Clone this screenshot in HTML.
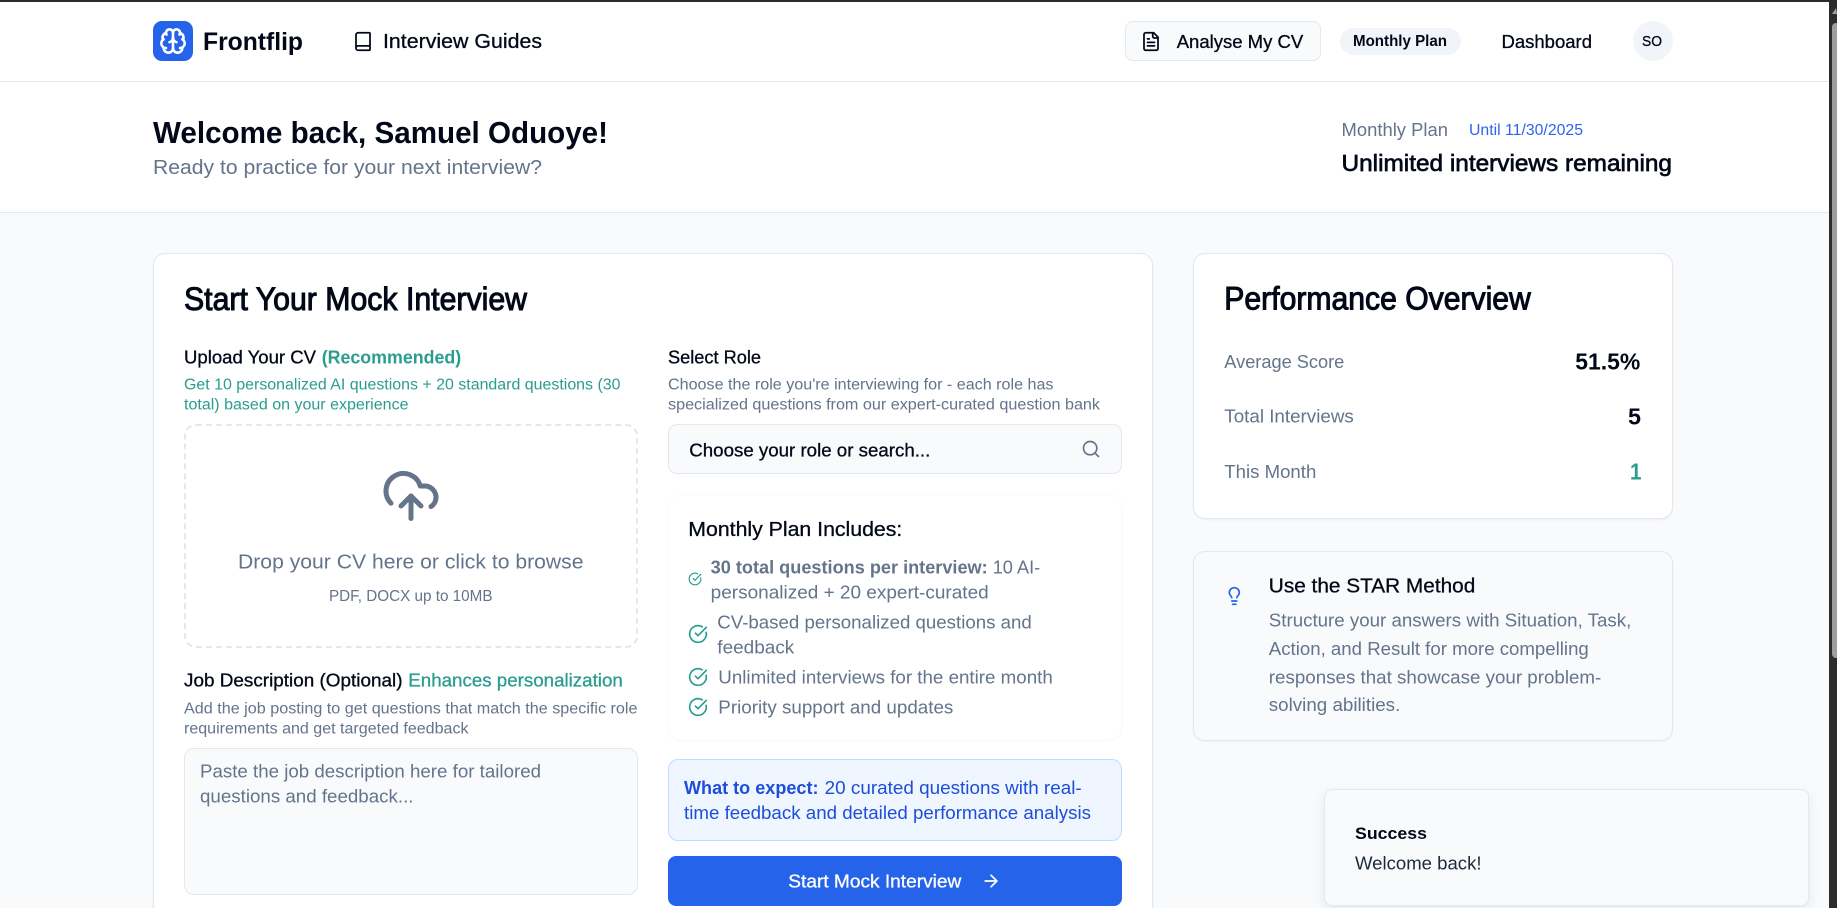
<!DOCTYPE html>
<html lang="en">
<head>
<meta charset="utf-8">
<title>Frontflip Dashboard</title>
<style>
html,body{margin:0;padding:0;width:1837px;height:908px;overflow:hidden;background:#f8fafc}
*{box-sizing:border-box}
#page{position:absolute;left:0;top:0;width:1837px;height:908px;overflow:hidden;background:#f8fafc}
.b{position:absolute}
svg.o{position:absolute;left:0;top:0;width:1837px;height:908px}
text{font-family:"Liberation Sans",Arial,sans-serif;fill:currentColor}
.d{color:#020817}.g{color:#64748b}.t{color:#2a9d8f}.u{color:#2f62f0}.n{color:#1d4ed8}.w{color:#fff}
.m{stroke:currentColor;stroke-width:.3px}
.s{stroke:currentColor;stroke-width:.65px}
.h{stroke:currentColor;stroke-width:1px}
.k{font-weight:700}
.i{fill:none;stroke-linecap:round;stroke-linejoin:round;stroke-width:2}
.i path,.i circle{fill:none}
</style>
</head>
<body>
<div id="page">
<div class="b" style="left:0;top:0;width:1829px;height:212px;background:#fff"></div>
<div class="b" style="left:0;top:81px;width:1829px;height:1px;background:#e2e8f0"></div>
<div class="b" style="left:0;top:212px;width:1829px;height:1px;background:#e2e8f0"></div>
<div class="b" style="left:0;top:0;width:1829px;height:2px;background:#2c2c2c"></div>

<div class="b" style="left:153px;top:21px;width:40px;height:40px;border-radius:9px;background:#2563eb"></div>
<div class="b" style="left:1125px;top:21px;width:196px;height:40px;border-radius:8px;background:#f8fafc;border:1px solid #e2e8f0"></div>
<div class="b" style="left:1340px;top:28px;width:121px;height:27px;border-radius:14px;background:#f1f5f9"></div>
<div class="b" style="left:1633px;top:21px;width:40px;height:40px;border-radius:50%;background:#f1f5f9"></div>

<div class="b" style="left:153px;top:253px;width:1000px;height:700px;border-radius:12px;background:#fff;border:1px solid #e2e8f0;box-shadow:0 1px 2px rgba(0,0,0,.05)"></div>
<div class="b" style="left:184px;top:424px;width:454px;height:224px;border-radius:12px;background:#fff;border:2px dashed #e2e8f0"></div>
<div class="b" style="left:184px;top:748px;width:454px;height:147px;border-radius:10px;background:#f8fafc;border:1px solid #e2e8f0"></div>
<div class="b" style="left:668px;top:424px;width:454px;height:50px;border-radius:9px;background:#f8fafc;border:1px solid #e2e8f0"></div>
<div class="b" style="left:668px;top:494px;width:454px;height:246px;border-radius:12px;background:#fff;border:1px solid #fafbfc;box-shadow:0 1px 2px rgba(0,0,0,.03)"></div>
<div class="b" style="left:668px;top:759px;width:454px;height:82px;border-radius:10px;background:#eff6ff;border:1px solid #bfdbfe"></div>
<div class="b" style="left:668px;top:856px;width:454px;height:50px;border-radius:8px;background:#2563eb"></div>

<div class="b" style="left:1193px;top:253px;width:480px;height:266px;border-radius:12px;background:#fff;border:1px solid #e2e8f0;box-shadow:0 1px 2px rgba(0,0,0,.05)"></div>
<div class="b" style="left:1193px;top:551px;width:480px;height:190px;border-radius:12px;background:#f8fafc;border:1px solid #e2e8f0;box-shadow:0 1px 2px rgba(0,0,0,.04)"></div>
<div class="b" style="left:1324px;top:789px;width:485px;height:117px;border-radius:8px;background:#f9fafc;border:1px solid #e2e8f0;box-shadow:0 4px 12px rgba(0,0,0,.08)"></div>

<div class="b" style="left:1829px;top:0;width:8px;height:908px;background:#2c2c2c"></div>
<div class="b" style="left:1832px;top:23px;width:8px;height:635px;border-radius:5px;background:#9e9e9e"></div>

<svg class="o" viewBox="0 0 1837 908" xmlns="http://www.w3.org/2000/svg">
<polygon points="1836,8 1832,14 1837,14" fill="#9e9e9e"/>

<!-- Icons -->
<g class="i" stroke="#fff" transform="translate(159 27) scale(1.167)" style="stroke-width:2.2">
<path d="M12 18V5"/><path d="M15 13a4.17 4.17 0 0 1-3-4 4.17 4.17 0 0 1-3 4"/><path d="M17.598 6.5A3 3 0 1 0 12 5a3 3 0 1 0-5.598 1.5"/><path d="M17.997 5.125a4 4 0 0 1 2.526 5.77"/><path d="M18 18a4 4 0 0 0 2-7.464"/><path d="M19.967 17.483A4 4 0 1 1 12 18a4 4 0 1 1-7.967-.517"/><path d="M6 18a4 4 0 0 1-2-7.464"/><path d="M6.003 5.125a4 4 0 0 0-2.526 5.77"/>
</g>
<g class="i" stroke="#020817" transform="translate(352.5 31) scale(.875)"><path d="M4 19.5v-15A2.5 2.5 0 0 1 6.5 2H19a1 1 0 0 1 1 1v18a1 1 0 0 1-1 1H6.5a1 1 0 0 1 0-5H20"/></g>
<g class="i" stroke="#020817" transform="translate(1140.5 31) scale(.875)"><path d="M15 2H6a2 2 0 0 0-2 2v16a2 2 0 0 0 2 2h12a2 2 0 0 0 2-2V7Z"/><path d="M14 2v4a2 2 0 0 0 2 2h4"/><path d="M10 9H8"/><path d="M16 13H8"/><path d="M16 17H8"/></g>
<g class="i" stroke="#64748b" transform="translate(381 466) scale(2.5)"><path d="M4 14.899A7 7 0 1 1 15.71 8h1.79a4.5 4.5 0 0 1 2.5 8.242"/><path d="M12 12v9"/><path d="m16 16-4-4-4 4"/></g>
<g class="i" stroke="#64748b" transform="translate(1081 439) scale(.833)"><circle cx="11" cy="11" r="8"/><path d="m21 21-4.3-4.3"/></g>
<g class="i" stroke="#2a9d8f" transform="translate(688 572) scale(.583)"><path d="M21.801 10A10 10 0 1 1 17 3.335"/><path d="m9 11 3 3L22 4"/></g>
<g class="i" stroke="#2a9d8f" transform="translate(688 624) scale(.833)"><path d="M21.801 10A10 10 0 1 1 17 3.335"/><path d="m9 11 3 3L22 4"/></g>
<g class="i" stroke="#2a9d8f" transform="translate(688 667) scale(.833)"><path d="M21.801 10A10 10 0 1 1 17 3.335"/><path d="m9 11 3 3L22 4"/></g>
<g class="i" stroke="#2a9d8f" transform="translate(688 697) scale(.833)"><path d="M21.801 10A10 10 0 1 1 17 3.335"/><path d="m9 11 3 3L22 4"/></g>
<g class="i" stroke="#fff" transform="translate(981 871) scale(.833)"><path d="M5 12h14"/><path d="m12 5 7 7-7 7"/></g>
<g class="i" stroke="#2563eb" transform="translate(1224.3 586) scale(.833)"><path d="M15 14c.2-1 .7-1.7 1.5-2.5 1-.9 1.5-2.2 1.5-3.5A6 6 0 0 0 6 8c0 1 .2 2.2 1.5 3.5.7.7 1.3 1.5 1.5 2.5"/><path d="M9 18h6"/><path d="M10 22h4"/></g>

<!-- Header -->
<text class="d k" x="203" y="50" font-size="25" textLength="100" lengthAdjust="spacingAndGlyphs">Frontflip</text>
<text class="d m" x="383" y="48" font-size="20.5" textLength="159" lengthAdjust="spacingAndGlyphs">Interview Guides</text>
<text class="d m" x="1176.7" y="48" font-size="18.5" textLength="126.5" lengthAdjust="spacingAndGlyphs">Analyse My CV</text>
<text class="d k" x="1353" y="46" font-size="15.5" textLength="94" lengthAdjust="spacingAndGlyphs">Monthly Plan</text>
<text class="d m" x="1501.5" y="48" font-size="18.5" textLength="90.5" lengthAdjust="spacingAndGlyphs">Dashboard</text>
<text class="d m" x="1642" y="46" font-size="14.5" textLength="20" lengthAdjust="spacingAndGlyphs">SO</text>

<!-- Welcome -->
<text class="d k" x="153" y="143" font-size="31" textLength="455" lengthAdjust="spacingAndGlyphs">Welcome back, Samuel Oduoye!</text>
<text class="g" x="153" y="174" font-size="20.5" textLength="389" lengthAdjust="spacingAndGlyphs">Ready to practice for your next interview?</text>
<text class="g" x="1341.5" y="136" font-size="18.5" textLength="106.5" lengthAdjust="spacingAndGlyphs">Monthly Plan</text>
<text class="u" x="1469" y="135" font-size="15.5" textLength="114" lengthAdjust="spacingAndGlyphs">Until 11/30/2025</text>
<text class="d s" x="1341.5" y="171" font-size="23" textLength="330.5" lengthAdjust="spacingAndGlyphs">Unlimited interviews remaining</text>

<!-- Left card -->
<text class="d h" x="184" y="310" font-size="32" textLength="343" lengthAdjust="spacingAndGlyphs">Start Your Mock Interview</text>
<text class="d m" x="184" y="363.3" font-size="18.5" textLength="132" lengthAdjust="spacingAndGlyphs">Upload Your CV</text>
<text class="t k" x="321.7" y="363.3" font-size="18.5" textLength="139.5" lengthAdjust="spacingAndGlyphs">(Recommended)</text>
<text class="t" x="184" y="389.3" font-size="15.5" textLength="436.5" lengthAdjust="spacingAndGlyphs">Get 10 personalized AI questions + 20 standard questions (30</text>
<text class="t" x="184" y="409.3" font-size="15.5" textLength="224.5" lengthAdjust="spacingAndGlyphs">total) based on your experience</text>
<text class="g" x="238" y="568.3" font-size="20.5" textLength="345.5" lengthAdjust="spacingAndGlyphs">Drop your CV here or click to browse</text>
<text class="g" x="329" y="601" font-size="15.5" textLength="163.5" lengthAdjust="spacingAndGlyphs">PDF, DOCX up to 10MB</text>
<text class="d m" x="184" y="686.7" font-size="18.5" textLength="218.5" lengthAdjust="spacingAndGlyphs">Job Description (Optional)</text>
<text class="t m" x="408.3" y="686.7" font-size="18.5" textLength="214.5" lengthAdjust="spacingAndGlyphs">Enhances personalization</text>
<text class="g" x="184" y="713.3" font-size="15.5" textLength="453.5" lengthAdjust="spacingAndGlyphs">Add the job posting to get questions that match the specific role</text>
<text class="g" x="184" y="733.3" font-size="15.5" textLength="284.5" lengthAdjust="spacingAndGlyphs">requirements and get targeted feedback</text>
<text class="g" x="200" y="777.7" font-size="18.5" textLength="341" lengthAdjust="spacingAndGlyphs">Paste the job description here for tailored</text>
<text class="g" x="200" y="802.7" font-size="18.5" textLength="213.5" lengthAdjust="spacingAndGlyphs">questions and feedback...</text>

<text class="d m" x="668" y="363.3" font-size="18.5" textLength="93" lengthAdjust="spacingAndGlyphs">Select Role</text>
<text class="g" x="668" y="389.3" font-size="15.5" textLength="385.5" lengthAdjust="spacingAndGlyphs">Choose the role you're interviewing for - each role has</text>
<text class="g" x="668" y="409.3" font-size="15.5" textLength="432" lengthAdjust="spacingAndGlyphs">specialized questions from our expert-curated question bank</text>
<text class="d m" x="689.3" y="456.7" font-size="18.5" textLength="241" lengthAdjust="spacingAndGlyphs">Choose your role or search...</text>
<text class="d m" x="688.3" y="536" font-size="20.5" textLength="214" lengthAdjust="spacingAndGlyphs">Monthly Plan Includes:</text>
<text class="g k" x="710.7" y="573.3" font-size="18" textLength="277" lengthAdjust="spacingAndGlyphs">30 total questions per interview:</text>
<text class="g" x="992.7" y="573.3" font-size="18.5" textLength="47.5" lengthAdjust="spacingAndGlyphs">10 AI-</text>
<text class="g" x="710.7" y="598.3" font-size="18.5" textLength="278" lengthAdjust="spacingAndGlyphs">personalized + 20 expert-curated</text>
<text class="g" x="717.3" y="628.3" font-size="18.5" textLength="314.5" lengthAdjust="spacingAndGlyphs">CV-based personalized questions and</text>
<text class="g" x="717.3" y="653.3" font-size="18.5" textLength="77" lengthAdjust="spacingAndGlyphs">feedback</text>
<text class="g" x="718.3" y="683.3" font-size="18.5" textLength="334.5" lengthAdjust="spacingAndGlyphs">Unlimited interviews for the entire month</text>
<text class="g" x="718.3" y="713.3" font-size="18.5" textLength="235" lengthAdjust="spacingAndGlyphs">Priority support and updates</text>

<text class="n k" x="684" y="794" font-size="18" textLength="134.5" lengthAdjust="spacingAndGlyphs">What to expect:</text>
<text class="n" x="824.7" y="794" font-size="18.5" textLength="257" lengthAdjust="spacingAndGlyphs">20 curated questions with real-</text>
<text class="n" x="684" y="819" font-size="18.5" textLength="407" lengthAdjust="spacingAndGlyphs">time feedback and detailed performance analysis</text>
<text class="w m" x="788.3" y="887.3" font-size="18.5" textLength="173" lengthAdjust="spacingAndGlyphs">Start Mock Interview</text>

<!-- Right column -->
<text class="d h" x="1224.3" y="309.3" font-size="32" textLength="306.5" lengthAdjust="spacingAndGlyphs">Performance Overview</text>
<text class="g" x="1224.3" y="368" font-size="18.5" textLength="120" lengthAdjust="spacingAndGlyphs">Average Score</text>
<text class="d k" x="1575.3" y="369.3" font-size="23" textLength="65" lengthAdjust="spacingAndGlyphs">51.5%</text>
<text class="g" x="1224.3" y="422.7" font-size="18.5" textLength="129.5" lengthAdjust="spacingAndGlyphs">Total Interviews</text>
<text class="d k" x="1628" y="424.3" font-size="23" textLength="13" lengthAdjust="spacingAndGlyphs">5</text>
<text class="g" x="1224.3" y="478" font-size="18.5" textLength="92" lengthAdjust="spacingAndGlyphs">This Month</text>
<text class="t k" x="1630" y="479.3" font-size="23" textLength="11.5" lengthAdjust="spacingAndGlyphs">1</text>

<text class="d m" x="1268.8" y="592.7" font-size="20.5" textLength="206.5" lengthAdjust="spacingAndGlyphs">Use the STAR Method</text>
<text class="g" x="1268.8" y="626.7" font-size="18.5" textLength="362.5" lengthAdjust="spacingAndGlyphs">Structure your answers with Situation, Task,</text>
<text class="g" x="1268.8" y="655" font-size="18.5" textLength="320" lengthAdjust="spacingAndGlyphs">Action, and Result for more compelling</text>
<text class="g" x="1268.8" y="683.3" font-size="18.5" textLength="332.5" lengthAdjust="spacingAndGlyphs">responses that showcase your problem-</text>
<text class="g" x="1268.8" y="711" font-size="18.5" textLength="131.5" lengthAdjust="spacingAndGlyphs">solving abilities.</text>

<text class="d k" x="1355" y="839" font-size="17" textLength="72" lengthAdjust="spacingAndGlyphs">Success</text>
<text style="color:#1e293b" x="1355" y="869.3" font-size="18.5" textLength="126.5" lengthAdjust="spacingAndGlyphs">Welcome back!</text>
</svg>
</div>
</body>
</html>
